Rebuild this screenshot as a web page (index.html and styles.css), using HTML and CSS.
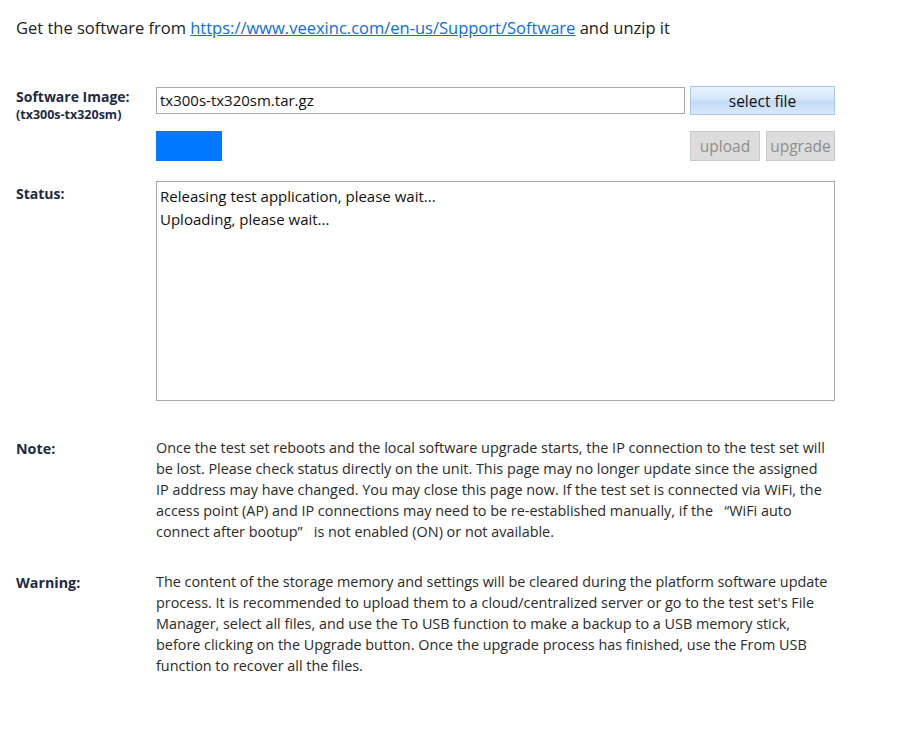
FILE: index.html
```html
<!DOCTYPE html>
<html>
<head>
<meta charset="utf-8">
<link rel="stylesheet" href="styles.css">
</head>
<body>
<div class="page">
  <p class="intro">Get the software from <a href="#">https://www.veexinc.com/en-us/Support/Software</a> and unzip it</p>

  <div class="row row-image">
    <div class="label">Software Image:<div class="sub">(tx300s-tx320sm)</div></div>
    <div class="field">
      <div class="file-line">
        <div class="input">tx300s-tx320sm.tar.gz</div>
        <button class="btn-select">select file</button>
      </div>
      <div class="action-line">
        <div class="progress"></div>
        <div class="actions">
          <button class="btn-dis btn-upload">upload</button>
          <button class="btn-dis btn-upgrade">upgrade</button>
        </div>
      </div>
    </div>
  </div>

  <div class="row row-status">
    <div class="label">Status:</div>
    <div class="status">Releasing test application, please wait...<br>Uploading, please wait...</div>
  </div>

  <div class="row row-note">
    <div class="label">Note:</div>
    <div class="text">Once the test set reboots and the local software upgrade starts, the IP connection to the test set will<br>be lost. Please check status directly on the unit. This page may no longer update since the assigned<br>IP address may have changed. You may close this page now. If the test set is connected via WiFi, the<br>access point (AP) and IP connections may need to be re-established manually, if the &nbsp;&nbsp;“WiFi auto<br>connect after bootup” &nbsp;&nbsp;is not enabled (ON) or not available.</div>
  </div>

  <div class="row row-warning">
    <div class="label">Warning:</div>
    <div class="text">The content of the storage memory and settings will be cleared during the platform software update<br>process. It is recommended to upload them to a cloud/centralized server or go to the test set's File<br>Manager, select all files, and use the To USB function to make a backup to a USB memory stick,<br>before clicking on the Upgrade button. Once the upgrade process has finished, use the From USB<br>function to recover all the files.</div>
  </div>
</div>
</body>
</html>
```

FILE: styles.css
```css
* { box-sizing: border-box; }
body {
  margin: 0;
  background: #fff;
  font-family: "Open Sans", "Noto Sans", sans-serif;
  color: #222;
}
.page {
  padding: 0 0 0 16px;
  width: 900px;
}
.intro {
  margin: 0;
  padding-top: 16px;
  font-size: 16.5px;
  line-height: 24px;
  color: #222;
  white-space: nowrap;
}
.intro a { color: #0a6ee8; text-decoration: underline; }

.row {
  display: flex;
}
.label {
  width: 140px;
  flex: none;
  font-weight: 700;
  font-size: 14px;
  color: #1d2b44;
}
.label .sub {
  font-size: 12.5px;
  line-height: 15px;
  margin-top: 1px;
}
.row-image { margin-top: 46px; }
.row-image .label { padding-top: 2px; line-height: 18px; }
.field { width: 679px; flex: none; }
.file-line { display: flex; gap: 5px; align-items: flex-start; }
.input {
  width: 529px;
  height: 27px;
  margin-top: 1px;
  border: 1px solid #a8a8a8;
  font-size: 15px;
  line-height: 24px;
  padding-left: 3px;
  color: #111;
}
.btn-select {
  width: 145px;
  height: 29px;
  border: 1px solid #a7c6ec;
  background: linear-gradient(#eaf3fd 0%, #d4e6fb 45%, #c3dbf8 55%, #d8e8fb 100%);
  font-family: inherit;
  font-size: 15.5px;
  color: #111;
  padding: 0;
}
.action-line {
  display: flex;
  justify-content: space-between;
  margin-top: 16px;
}
.progress {
  width: 66px;
  height: 30px;
  background: #0078ff;
}
.actions { display: flex; gap: 6px; }
.btn-dis {
  height: 30px;
  background: #dcdcdc;
  border: 1px solid #c9c9c9;
  color: #8e8e8e;
  font-family: inherit;
  font-size: 15.5px;
  padding: 0;
}
.btn-upload { width: 70px; }
.btn-upgrade { width: 69px; }

.row-status { margin-top: 20px; }
.row-status .label { padding-top: 3px; }
.status {
  width: 679px;
  height: 220px;
  border: 1px solid #a8a8a8;
  padding: 3px 3px;
  font-size: 15px;
  line-height: 23px;
  color: #111;
}

.row-note { margin-top: 36px; }
.row-warning { margin-top: 29px; }
.row-note .label, .row-warning .label { padding-top: 2px; font-size: 14.3px; }
.text {
  width: 720px;
  font-size: 14.4px;
  line-height: 21px;
  color: #2b2b2b;
  white-space: nowrap;
}
```
